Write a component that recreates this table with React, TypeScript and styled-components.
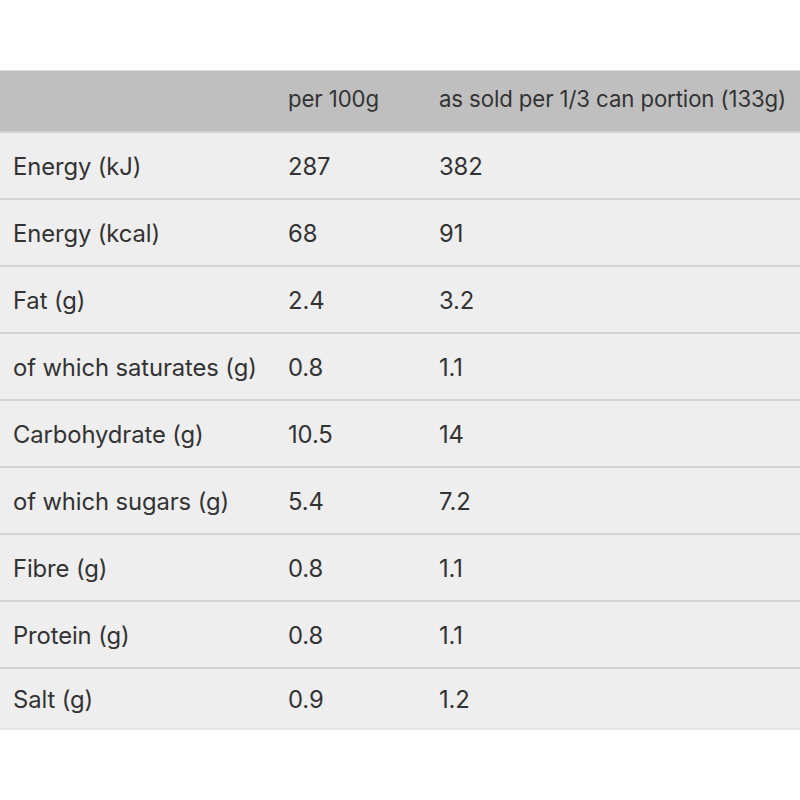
import React from "react";
import styled, { createGlobalStyle } from "styled-components";

const GlobalStyle = createGlobalStyle`
  body {
    margin: 0;
    background: #ffffff;
    font-family: Inter, "Noto Sans", sans-serif;
  }
`;

const Page = styled.div`
  width: 800px;
  height: 800px;
  padding-top: 70px;
  box-sizing: border-box;
`;

const Table = styled.table`
  width: 800px;
  border-collapse: collapse;
  table-layout: fixed;
  color: #333333;
`;

const HeadRow = styled.tr`
  height: 61px;
  background: #bfbfbf;
  border-top: 1px solid #dcdcdc;
`;

const HeadCell = styled.th`
  text-align: left;
  font-weight: 400;
  font-size: 22.2px;
  letter-spacing: -0.1px;
  padding: 0 0 4px 0;
  white-space: nowrap;
  border-bottom: 2px solid #d3d3d3;
`;

const Row = styled.tr`
  height: 67px;
  background: #eeeeee;
  border-bottom: 2px solid #d3d3d3;

  &:last-child {
    height: 61px;
    border-bottom: 2px solid #e6e6e6;
  }
`;

const Cell = styled.td<{ $pl?: number }>`
  font-size: 23.8px;
  letter-spacing: -0.1px;
  padding: 2px 0 0 ${(p) => p.$pl ?? 0}px;
  white-space: nowrap;
  vertical-align: middle;
`;

const rows: [string, string, string][] = [
  ["Energy (kJ)", "287", "382"],
  ["Energy (kcal)", "68", "91"],
  ["Fat (g)", "2.4", "3.2"],
  ["of which saturates (g)", "0.8", "1.1"],
  ["Carbohydrate (g)", "10.5", "14"],
  ["of which sugars (g)", "5.4", "7.2"],
  ["Fibre (g)", "0.8", "1.1"],
  ["Protein (g)", "0.8", "1.1"],
  ["Salt (g)", "0.9", "1.2"],
];

export default function App() {
  return (
    <Page>
      <GlobalStyle />
      <Table>
        <colgroup>
          <col style={{ width: 288 }} />
          <col style={{ width: 151 }} />
          <col />
        </colgroup>
        <thead>
          <HeadRow>
            <HeadCell />
            <HeadCell>per 100g</HeadCell>
            <HeadCell>as sold per 1/3 can portion (133g)</HeadCell>
          </HeadRow>
        </thead>
        <tbody>
          {rows.map(([name, per100, portion]) => (
            <Row key={name}>
              <Cell $pl={13}>{name}</Cell>
              <Cell>{per100}</Cell>
              <Cell>{portion}</Cell>
            </Row>
          ))}
        </tbody>
      </Table>
    </Page>
  );
}
